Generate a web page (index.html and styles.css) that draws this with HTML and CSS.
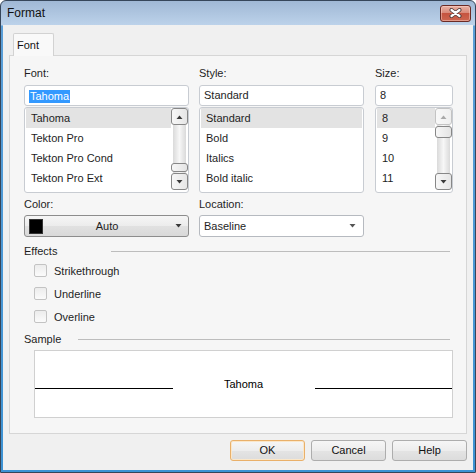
FILE: index.html
```html
<!DOCTYPE html>
<html>
<head>
<meta charset="utf-8">
<title>Format</title>
<link rel="stylesheet" href="styles.css">
</head>
<body>
<div class="window">
  <div class="titlebar">
    <span class="title">Format</span>
    <div class="close">
      <svg width="13" height="10" viewBox="0 0 13 10">
        <path d="M2.5 2 L10.5 8 M10.5 2 L2.5 8" stroke="#4a3a3a" stroke-width="4" stroke-linecap="round"/>
        <path d="M2.5 2 L10.5 8 M10.5 2 L2.5 8" stroke="#ffffff" stroke-width="2.2" stroke-linecap="round"/>
      </svg>
    </div>
  </div>
  <div class="client">
    <div class="tabs"><div class="tab">Font</div></div>
    <div class="panel">
      <div class="row1">
        <div class="col col-font">
          <div class="label">Font:</div>
          <div class="input"><span class="sel">Tahoma</span></div>
          <div class="list">
            <div class="items">
              <div class="item selected">Tahoma</div>
              <div class="item">Tekton Pro</div>
              <div class="item">Tekton Pro Cond</div>
              <div class="item">Tekton Pro Ext</div>
            </div>
            <div class="vscroll">
              <div class="sbtn"><svg width="7" height="4" viewBox="0 0 7 4"><polygon points="0.5,4 3.5,0.5 6.5,4" fill="#3a3a3a"/></svg></div>
              <div class="track"><div class="thumb thumb-font"></div></div>
              <div class="sbtn"><svg width="7" height="4" viewBox="0 0 7 4"><polygon points="0.5,0 3.5,3.5 6.5,0" fill="#3a3a3a"/></svg></div>
            </div>
          </div>
        </div>
        <div class="col col-style">
          <div class="label">Style:</div>
          <div class="input">Standard</div>
          <div class="list noscroll">
            <div class="items">
              <div class="item selected">Standard</div>
              <div class="item">Bold</div>
              <div class="item">Italics</div>
              <div class="item">Bold italic</div>
            </div>
          </div>
        </div>
        <div class="col col-size">
          <div class="label">Size:</div>
          <div class="input">8</div>
          <div class="list">
            <div class="items">
              <div class="item selected">8</div>
              <div class="item">9</div>
              <div class="item">10</div>
              <div class="item">11</div>
            </div>
            <div class="vscroll">
              <div class="sbtn disabled"><svg width="7" height="4" viewBox="0 0 7 4"><polygon points="0.5,4 3.5,0.5 6.5,4" fill="#a9a9a9"/></svg></div>
              <div class="track"><div class="thumb thumb-size"></div></div>
              <div class="sbtn"><svg width="7" height="4" viewBox="0 0 7 4"><polygon points="0.5,0 3.5,3.5 6.5,0" fill="#3a3a3a"/></svg></div>
            </div>
          </div>
        </div>
      </div>

      <div class="row2">
        <div class="col col-color">
          <div class="label label2">Color:</div>
          <div class="cbtn">
            <span class="swatch"></span>
            <span class="cbtn-text">Auto</span>
            <svg width="7" height="4" viewBox="0 0 7 4"><polygon points="0.5,0 3.5,3.5 6.5,0" fill="#3a3a3a"/></svg>
          </div>
        </div>
        <div class="col col-loc">
          <div class="label label2">Location:</div>
          <div class="combo">
            <span class="combo-text">Baseline</span>
            <svg width="7" height="4" viewBox="0 0 7 4"><polygon points="0.5,0 3.5,3.5 6.5,0" fill="#555"/></svg>
          </div>
        </div>
      </div>

      <div class="group-head effects-head">
        <span class="group-label effects-label">Effects</span>
        <span class="group-line"></span>
      </div>
      <div class="checks">
        <div class="check"><span class="box"></span><span>Strikethrough</span></div>
        <div class="check"><span class="box"></span><span>Underline</span></div>
        <div class="check"><span class="box"></span><span>Overline</span></div>
      </div>

      <div class="group-head sample-head">
        <span class="group-label sample-label">Sample</span>
        <span class="group-line"></span>
      </div>
      <div class="sample-box">
        <div class="sample-row">
          <span class="sline"></span>
          <span class="stext">Tahoma</span>
          <span class="sline"></span>
        </div>
      </div>
    </div>
    <div class="buttons">
      <div class="btn btn-default">OK</div>
      <div class="btn">Cancel</div>
      <div class="btn">Help</div>
    </div>
  </div>
</div>
</body>
</html>
```
FILE: styles.css
```css
* { box-sizing: border-box; }

body {
  margin: 0;
  font-family: "Liberation Sans", Arial, sans-serif;
  font-size: 11px;
  color: #1e1e1e;
}

.window {
  width: 476px;
  height: 473px;
  border: 1px solid #36465a;
  border-radius: 6px 6px 0 0;
  padding: 0 2px 2px;
  display: flex;
  flex-direction: column;
  overflow: hidden;
  background: linear-gradient(#a0b8d5 0, #bcd2ea 24px, #5b9fd8 25px, #3d92d3 100%);
}

.titlebar {
  height: 24px;
  flex: none;
  display: flex;
  align-items: center;
  justify-content: space-between;
  padding: 0 2px 0 4px;
}

.title {
  font-size: 12px;
  color: #111;
}

.close {
  width: 31px;
  height: 17px;
  border: 1px solid #6b2b25;
  border-radius: 3px;
  background: linear-gradient(#eab2a4 0, #d98a7a 45%, #c65440 50%, #cc6650 100%);
  display: flex;
  align-items: center;
  justify-content: center;
  box-shadow: inset 0 0 0 1px rgba(255, 220, 210, 0.45);
}

.client {
  flex: 1;
  background: #f0f0f0;
  padding: 8px 6px 9px;
  display: flex;
  flex-direction: column;
}

.tabs {
  height: 22px;
  flex: none;
  padding-left: 4px;
}

.tab {
  position: relative;
  z-index: 1;
  width: 41px;
  height: 23px;
  border: 1px solid #d2d2d2;
  border-bottom: none;
  border-radius: 2px 2px 0 0;
  background: #f9f9f9;
  padding-left: 3px;
  line-height: 22px;
  color: #111;
}

.panel {
  flex: 1;
  border: 1px solid #d6d6d6;
  background: #f6f6f6;
  padding: 10px 13px 0 14px;
}

.row1 {
  display: flex;
}

.col-font, .col-style, .col-color, .col-loc { width: 165px; }
.col-style, .col-loc { margin-left: 10px; }
.col-size { width: 78px; margin-left: 11px; }

.label {
  height: 14px;
  line-height: 14px;
  margin-bottom: 5px;
}

.label2 { margin-bottom: 4px; }

.input {
  height: 21px;
  border: 1px solid #c8ccd2;
  border-radius: 3px;
  background: #fff;
  padding: 0 4px;
  line-height: 19px;
  white-space: nowrap;
}

.sel {
  display: inline-block;
  background: #3399ff;
  color: #fff;
  line-height: 13px;
  padding: 0 1px;
  vertical-align: middle;
}

.list {
  margin-top: 1px;
  height: 86px;
  border: 1px solid #c8ccd2;
  border-radius: 3px;
  background: #fff;
  padding-left: 1px;
  display: flex;
}

.list.noscroll { padding-right: 1px; }

.items { flex: 1; }

.item {
  height: 20px;
  line-height: 20px;
  padding-left: 5px;
  white-space: nowrap;
}

.item.selected { background: #e3e3e3; }

.vscroll {
  width: 17px;
  flex: none;
  display: flex;
  flex-direction: column;
  padding-bottom: 2px;
}

.sbtn {
  height: 17px;
  flex: none;
  border: 1px solid #878787;
  border-radius: 3px;
  background: linear-gradient(90deg, #f7f7f7, #e6e6e6);
  display: flex;
  align-items: center;
  justify-content: center;
}

.sbtn.disabled {
  border-color: #c3c3c3;
  background: linear-gradient(90deg, #f8f8f8, #efefef);
}

.track {
  flex: 1;
  margin: 0 2px;
  background: linear-gradient(90deg, #dadada 0, #ebebeb 30%, #f7f7f7 50%, #ebebeb 70%, #dadada 100%);
}

.thumb {
  margin: 0 -2px;
  border: 1px solid #878787;
  border-radius: 3px;
  background: linear-gradient(90deg, #f7f7f7, #e4e4e4);
}

.thumb-font { margin-top: 38px; height: 9px; }
.thumb-size { margin-top: 1px; height: 12px; }

.row2 {
  display: flex;
  margin-top: 4px;
}

.cbtn {
  height: 22px;
  border: 1px solid #8d8d8d;
  border-radius: 3px;
  background: linear-gradient(#f6f6f6 0, #ececec 50%, #e1e1e1 51%, #d9d9d9 100%);
  display: flex;
  align-items: center;
  padding: 0 6px 0 4px;
}

.swatch {
  width: 14px;
  height: 15px;
  background: #000;
  border: 1px solid #333;
}

.cbtn-text {
  flex: 1;
  text-align: center;
  padding-right: 4px;
}

.combo {
  height: 22px;
  border: 1px solid #b6bac0;
  border-radius: 3px;
  background: #fff;
  display: flex;
  align-items: center;
  justify-content: space-between;
  padding: 0 7px 0 4px;
}

.group-head {
  display: flex;
  align-items: center;
  height: 14px;
  padding-right: 3px;
}

.effects-head { margin-top: 7px; }
.sample-head { margin-top: 4px; }

.group-label { line-height: 14px; }
.effects-label { width: 87px; }
.sample-label { width: 54px; }

.group-line {
  flex: 1;
  height: 1px;
  background: #bdbdbd;
}

.checks {
  margin-top: 1px;
  padding-left: 10px;
}

.check {
  height: 23px;
  display: flex;
  align-items: center;
}

.box {
  width: 13px;
  height: 13px;
  border: 1px solid #c3c3c3;
  border-radius: 2px;
  background: linear-gradient(#ececec, #fbfbfb);
  margin-right: 7px;
}

.sample-box {
  margin: 4px 0 0 10px;
  height: 68px;
  border: 1px solid #d0d0d0;
  background: #fff;
  padding-top: 26px;
}

.sample-row {
  display: grid;
  grid-template-columns: 1fr 142px 1fr;
}

.sline {
  align-self: end;
  height: 1px;
  background: #000;
  margin-bottom: 2px;
}

.stext {
  line-height: 14px;
  text-align: center;
  color: #000;
}

.buttons {
  display: flex;
  justify-content: flex-end;
  gap: 6px;
  margin-top: 6px;
  height: 21px;
  flex: none;
}

.btn {
  width: 75px;
  height: 21px;
  border: 1px solid #adadad;
  border-radius: 3px;
  background: linear-gradient(#f6f6f6 0, #ededed 50%, #e4e4e4 51%, #dcdcdc 100%);
  text-align: center;
  line-height: 19px;
  color: #111;
}

.btn-default {
  border-color: #e9b06a;
  box-shadow: inset 0 0 0 1px #fbe7c9;
}
```
